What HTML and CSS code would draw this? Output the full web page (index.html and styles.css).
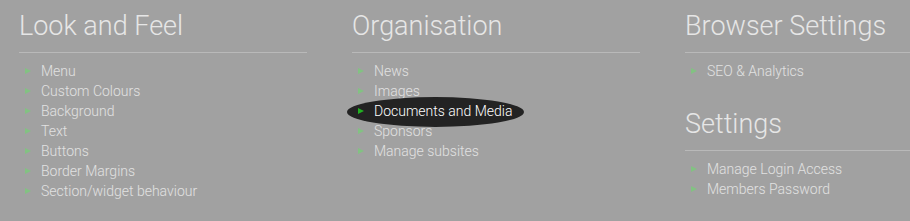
FILE: index.html
```html
<!DOCTYPE html>
<html lang="en">
<head>
  <meta charset="UTF-8">
  <title>Site Settings</title>
  <link rel="stylesheet" href="styles.css">
</head>
<body>
  <div class="columns">
    <div class="column">
      <div class="section">
        <h2>Look and Feel</h2>
        <ul>
          <li>Menu</li>
          <li>Custom Colours</li>
          <li>Background</li>
          <li>Text</li>
          <li>Buttons</li>
          <li>Border Margins</li>
          <li>Section/widget behaviour</li>
        </ul>
      </div>
    </div>
    <div class="column">
      <div class="section">
        <h2>Organisation</h2>
        <ul>
          <li>News</li>
          <li>Images</li>
          <li class="active">Documents and Media</li>
          <li>Sponsors</li>
          <li>Manage subsites</li>
        </ul>
      </div>
    </div>
    <div class="column">
      <div class="section">
        <h2>Browser Settings</h2>
        <ul>
          <li>SEO &amp; Analytics</li>
        </ul>
      </div>
      <div class="section spaced">
        <h2>Settings</h2>
        <ul>
          <li>Manage Login Access</li>
          <li>Members Password</li>
        </ul>
      </div>
    </div>
  </div>
</body>
</html>
```

FILE: styles.css
```css
html, body {
  margin: 0;
  padding: 0;
  background-color: #a1a1a1;
  overflow: hidden;
}
body {
  font-family: Roboto, "Liberation Sans", sans-serif;
  color: #e2e2e2;
}
.columns {
  display: grid;
  grid-template-columns: 333px 333px 333px;
  padding-left: 19px;
}
.section {
  padding-top: 9px;
  width: 288px;
}
.section.spaced {
  margin-top: 17px;
}
h2 {
  margin: 0;
  padding-bottom: 9px;
  font-size: 27px;
  font-weight: 300;
  line-height: 34px;
  color: #e6e6e6;
  border-bottom: 1px solid #b9b9b9;
}
ul {
  list-style: none;
  margin: 8px 0 0;
  padding: 0 0 0 22px;
}
li {
  position: relative;
  font-size: 14px;
  font-weight: 300;
  line-height: 20px;
}
li::before {
  content: "";
  position: absolute;
  left: -16px;
  top: 6.5px;
  border-left: 6px solid #82c282;
  border-top: 3.5px solid transparent;
  border-bottom: 3.5px solid transparent;
}
li.active {
  color: #fff;
  z-index: 0;
}
li.active::before {
  border-left-color: #22b022;
}
li.active::after {
  content: "";
  position: absolute;
  left: -27px;
  top: -4px;
  width: 177px;
  height: 30px;
  border-radius: 50%;
  background-color: #232323;
  z-index: -1;
}
```
